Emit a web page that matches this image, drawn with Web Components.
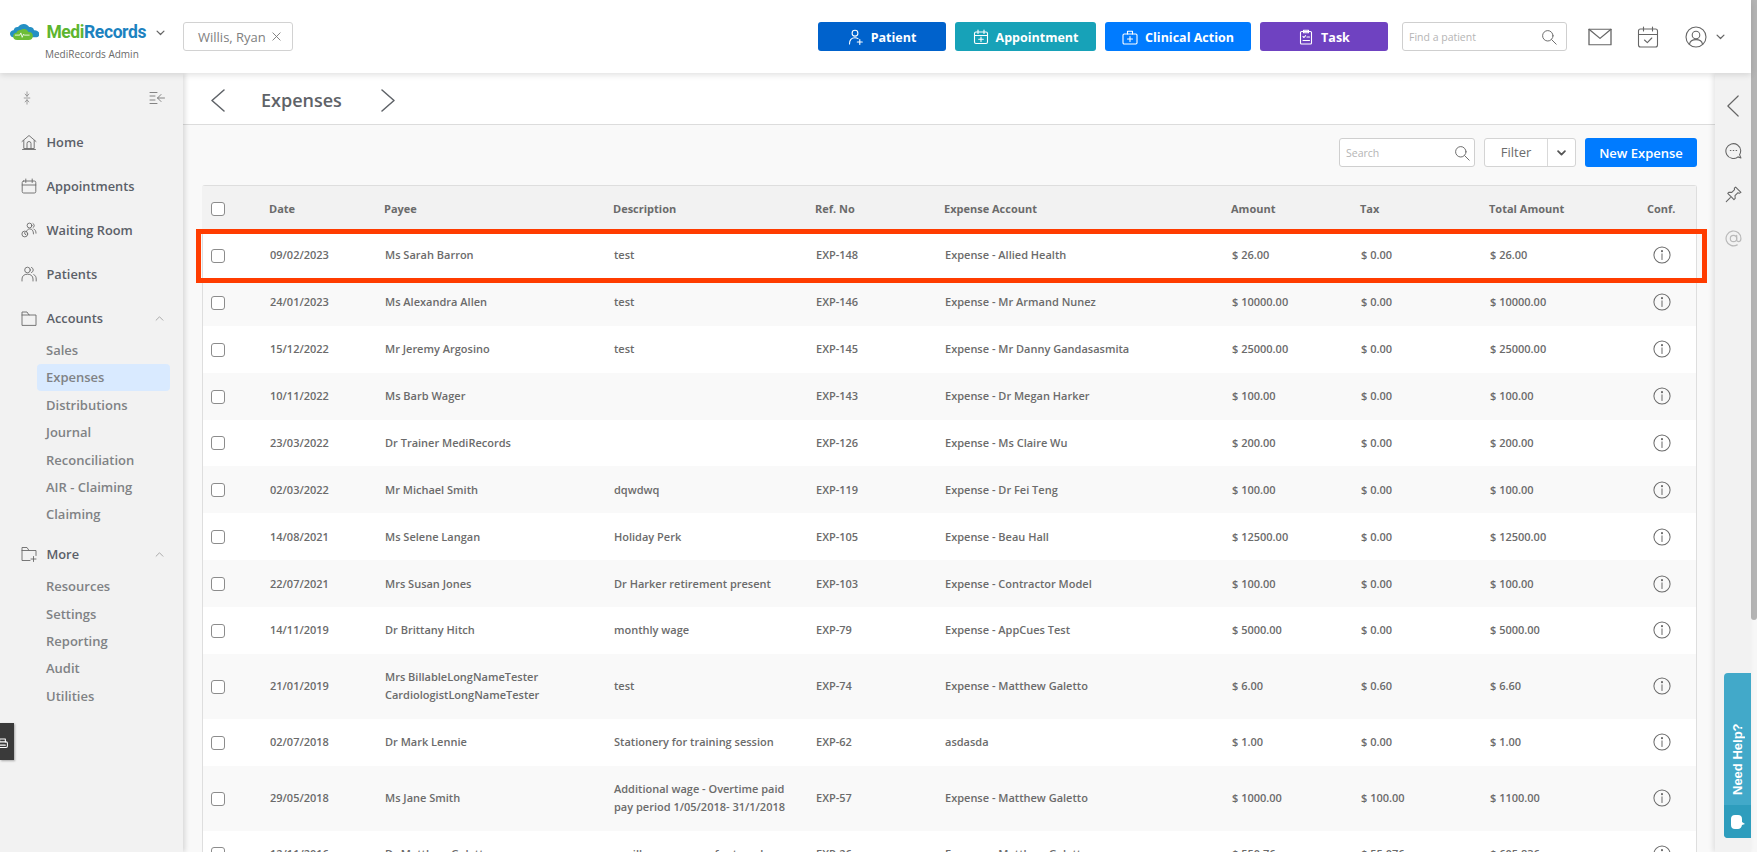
<!DOCTYPE html>
<html lang="en">
<head>
<meta charset="utf-8">
<title>Expenses</title>
<style>
    html, body { margin: 0; height: 100%; overflow: hidden; background: #f9f9f9; }
    body { font-family: "Open Sans", "Liberation Sans", sans-serif; }
</style>
</head>
<body>
<app-shell></app-shell>

<script>
const ICONS = {
    chevDown: '<path d="M3 6l5 5 5-5"/>',
    chevUp: '<path d="M3 10.5l5-5 5 5"/>',
    close: '<path d="M3.5 3.5l9 9M12.5 3.5l-9 9"/>',
    search: '<circle cx="6.8" cy="6.8" r="5.2"/><path d="M10.6 10.6l4.6 4.6"/>',
    patient: '<circle cx="7" cy="4.2" r="2.9"/><path d="M1.5 15c0-4 2-6.2 5.5-6.2 1.2 0 2.2.3 3 .8M11.8 10.5v5M9.3 13h5"/>',
    appointment: '<rect x="1.5" y="3" width="13" height="11.5" rx="1.5"/><path d="M1.5 6.5h13M5 1v3.4M11 1v3.4M8 8v4.6M5.7 10.3h4.6"/>',
    clinical: '<rect x="1" y="5" width="14" height="10" rx="1.2"/><path d="M5.5 5V2.2h5V5M8 7.5v5M5.5 10h5"/>',
    task: '<rect x="2.5" y="2.5" width="11" height="12.5" rx="1"/><path d="M5.5 1.2h5v2.6h-5zM5 7.5l1 1 1.6-1.8M9 8h2.5M5 11.5h6.5"/>',
    mail: '<rect x="1" y="2.5" width="22" height="17"/><path d="M1 2.5l11 10 11-10"/>',
    calCheck: '<rect x="1.5" y="3" width="19" height="18" rx="2"/><path d="M1.5 8.5h19M6.5 1v4M15.5 1v4M7.5 14l2.8 2.6 4.5-4.6"/>',
    user: '<circle cx="11" cy="11" r="10"/><circle cx="11" cy="9" r="3.8"/><path d="M4.5 18.2c.5-3 2.8-4.6 6.5-4.6s6 1.6 6.5 4.6"/>',
    pinch: '<path d="M8 1v5M5 3.500L8 6l3-2.500M8 15v-5M5 12.500L8 10l3 2.500M3.500 8h9"/>',
    collapse: '<path d="M1 2.5h7M1 6h5M1 10h5M1 13.5h7M15.5 8H8.5M12 4.5L8.5 8l3.5 3.5"/>',
    home: '<path d="M1 7.5L8 1.5l7 6M2.8 6.5V14.5h10.4V6.5M6 14.5V9.5a2 2 0 0 1 4 0v5M1.5 15.5h13"/>',
    calendar: '<rect x="1.2" y="3" width="13.6" height="12" rx="1.5"/><path d="M1.2 7h13.6M4.8 1v3.5M11.2 1v3.5"/>',
    waiting: '<circle cx="8.5" cy="3.5" r="2.4"/><path d="M12 1.5a2.4 2.4 0 0 1 0 4.2M5.5 9.5c.7-1.8 1.7-2.6 3.2-2.6 2.3 0 3.8 1.6 3.8 5M13 7.2c1.3.5 2 1.8 2 4"/><circle cx="3.8" cy="12" r="2.9"/><path d="M3.8 10.5V12l1 .7"/>',
    patients: '<circle cx="6.5" cy="4" r="2.8"/><path d="M1 15v-2c0-3 2.2-4.8 5.5-4.8S12 10 12 13v2M10.5 1.4a2.8 2.8 0 0 1 0 5.2M12.8 8.6c1.6.8 2.4 2.3 2.4 4.4v2"/>',
    folder: '<path d="M1 15V2h5l2 3h7v10zM1 5h7"/>',
    folderPlus: '<path d="M9 14.5H1V1.5h5l2 3h7v5M1 4.5h7M12.5 10.5v5M10 13h5"/>',
    info: '<circle cx="8" cy="8" r="7.2"/><path d="M8 7v5"/><circle cx="8" cy="4.6" r=".5"/>',
    chat: '<path d="M15 15l-2.800-1A7 7 0 1 1 14.800 8c0 1.500-.4 2.800-1.100 3.900z"/><path d="M5 8h.6M7.700 8h.6M10.400 8h.6"/>',
    pin: '<path d="M10 1l5 5-1.500.8-1.500-.4-2.600 2.600.2 2.600-1.200 1.200-2-2-3.400-3.400-.4-.4L3.800 5.800l2.600.2L9 3.400 8.800 2zM5 11l-3.800 3.800"/>',
    at: '<circle cx="8" cy="8" r="3"/><path d="M11 5v4.200c0 1.200.8 1.800 1.700 1.800 1.300 0 2.300-1.200 2.300-3A7 7 0 1 0 11.500 14"/>',
    back: '<path d="M13 1L1 12l12 11"/>',
    next: '<path d="M1 1l12 11L1 23"/>',
    printer: '<rect x="2" y="6" width="12" height="7" rx="1.500"/><path d="M4.500 6V2.500h7V6M4.500 10h7"/>'
};

class UiIcon extends HTMLElement {
    connectedCallback() {
        const name = this.getAttribute("name");
        const w = this.getAttribute("w") || 16;
        const h = this.getAttribute("h") || w;
        const vb = this.getAttribute("vb") || "0 0 16 16";
        const sw = this.getAttribute("sw") || 1;
        if (!this.shadowRoot) this.attachShadow({ mode: "open" });
        this.shadowRoot.innerHTML = `
        <style>
            :host { display: inline-flex; flex: none; color: inherit; }
            svg { display: block; fill: none; stroke: currentColor; stroke-linecap: round; stroke-linejoin: round; }
        </style>
        <svg width="${w}" height="${h}" viewBox="${vb}" stroke-width="${sw}" preserveAspectRatio="none">${ICONS[name]}</svg>`;
    }
}
customElements.define("ui-icon", UiIcon);

class ActionBtn extends HTMLElement {
    connectedCallback() {
        this.attachShadow({ mode: "open" });
        this.shadowRoot.innerHTML = `
        <style>
            :host {
                display: flex; align-items: center; justify-content: center; gap: 7px;
                box-sizing: border-box; height: 29px; padding-top: 1px; border-radius: 3px;
                background: var(--bg); color: #fff;
                width: var(--w);
                font-size: 12.5px; font-weight: 700;
            }
        </style>
        <ui-icon name="${this.getAttribute("icon")}" w="16" sw="1.1"></ui-icon>
        <slot></slot>`;
    }
}
customElements.define("action-btn", ActionBtn);

class SearchBox extends HTMLElement {
    connectedCallback() {
        this.attachShadow({ mode: "open" });
        this.shadowRoot.innerHTML = `
        <style>
            :host {
                display: flex; align-items: center; justify-content: space-between;
                box-sizing: border-box; height: 29px; width: var(--w);
                padding: 0 var(--pr, 9px) 0 6px;
                background: #fff; border: 1px solid #cfcfcf; border-radius: 3px;
                color: #b5b5b5; font-size: 10.5px; font-weight: 500;
            }
            ui-icon { color: #6f6f6f; }
        </style>
        <span>${this.getAttribute("placeholder")}</span>
        <ui-icon name="search" w="16"></ui-icon>`;
    }
}
customElements.define("search-box", SearchBox);

class AppHeader extends HTMLElement {
    connectedCallback() {
        this.attachShadow({ mode: "open" });
        this.shadowRoot.innerHTML = `
        <style>
            :host {
                display: flex; align-items: center; flex: none;
                box-sizing: border-box; height: 73px; padding: 0 25px 0 10px;
                background: #fff; position: relative; z-index: 3;
                box-shadow: 0 2px 6px rgba(0,0,0,.12);
            }
            .brand { width: 156px; flex: none; padding-top: 8px; }
            .logo { display: flex; align-items: center; height: 24px; }
            .word {
                margin-left: 7px; font: 700 17.5px "Roboto", "Liberation Sans", sans-serif;
                letter-spacing: -.4px; color: #1c82bf;
            }
            .word b { color: #5db52f; font-weight: 700; }
            .logo ui-icon { margin-left: 9px; color: #666; }
            .sub { margin: 3px 0 0 35px; font-size: 10px; font-weight: 500; color: #6a6a6a; white-space: nowrap; }
            .tag {
                display: flex; align-items: center; gap: 4px; box-sizing: border-box;
                width: 110px; height: 29px; margin-left: 17px; padding-left: 14px;
                border: 1px solid #d2d2d2; border-radius: 3px;
                font-size: 13px; color: #808080; white-space: nowrap;
            }
            .tag ui-icon { color: #777; }
            .actions { display: flex; gap: 9px; margin-left: auto; }
            search-box { margin-left: 14px; --w: 165px; }
            .mail { margin-left: 21px; color: #666; }
            .cal { margin-left: 25px; color: #666; }
            .user { margin-left: 26px; color: #666; }
            .caret { margin-left: 8px; color: #666; }
        </style>
        <div class="brand">
            <div class="logo">
                <svg width="33" height="18" viewBox="0 0 33 18">
                    <path d="M4 15C1 15 0 12.500 0 11c0-2.500 2-4 4-4 .5-2.500 3-4 5-3.500C10.500 1 13 0 15.500 0c3 0 5 1.500 6 3.500 2-.7 5 .5 5.500 3.500 3-.5 6 1.500 6 4.500 0 2.500-2 3.500-4 3.500z" fill="#2590c4"/>
                    <path d="M8 18c-3 0-4.500-2-4.500-4.300 0-2.200 1.700-3.700 3.700-3.900C8 7.500 10 6.500 12 6.800c1.500-1.300 4-1.500 6-.6 1.500.7 2.300 1.700 2.700 3 2.500-.4 5 1.200 5 4.200 0 2.600-1.700 4.600-4.700 4.600z" fill="#6cbd36"/>
                    <path d="M5.500 12.500h5.500l1.200-2.500 1.500 5 1.500-3.500.8 1h6" fill="none" stroke="#fff" stroke-width=".9"/>
                </svg>
                <span class="word"><b>Medi</b>Records</span>
                <ui-icon name="chevDown" w="11" sw="1.8"></ui-icon>
            </div>
            <div class="sub">MediRecords Admin</div>
        </div>
        <div class="tag">Willis, Ryan<ui-icon name="close" w="13" sw="1.1"></ui-icon></div>
        <div class="actions">
            <action-btn icon="patient" style="--bg:#0062cc;--w:128px">Patient</action-btn>
            <action-btn icon="appointment" style="--bg:#17a2b8;--w:141px">Appointment</action-btn>
            <action-btn icon="clinical" style="--bg:#007bff;--w:146px">Clinical Action</action-btn>
            <action-btn icon="task" style="--bg:#6f42c1;--w:128px">Task</action-btn>
        </div>
        <search-box placeholder="Find a patient"></search-box>
        <ui-icon class="mail" name="mail" w="24" h="20" vb="0 0 24 22" sw="1.3"></ui-icon>
        <ui-icon class="cal" name="calCheck" w="22" vb="0 0 22 22" sw="1.1"></ui-icon>
        <ui-icon class="user" name="user" w="22" vb="0 0 22 22" sw="1.1"></ui-icon>
        <ui-icon class="caret" name="chevDown" w="11" sw="1.8"></ui-icon>`;
    }
}
customElements.define("app-header", AppHeader);

class NavItem extends HTMLElement {
    connectedCallback() {
        const icon = this.getAttribute("icon");
        const open = this.hasAttribute("open");
        this.attachShadow({ mode: "open" });
        this.shadowRoot.innerHTML = `
        <style>
            :host {
                display: flex; align-items: center; box-sizing: border-box;
                height: 44px; padding-left: 21px;
                font-size: 12.8px; font-weight: 600; color: #5b6068;
            }
            ui-icon { color: #6a6a6a; margin-right: 9.5px; }
            .up { margin-left: auto; margin-right: 18px; color: #8a8a8a; }
        </style>
        <ui-icon name="${icon}" w="16" sw=".9"></ui-icon>
        <slot></slot>
        ${open ? '<ui-icon class="up" name="chevUp" w="11" sw="1"></ui-icon>' : ""}`;
    }
}
customElements.define("nav-item", NavItem);

class NavSub extends HTMLElement {
    connectedCallback() {
        this.attachShadow({ mode: "open" });
        this.shadowRoot.innerHTML = `
        <style>
            :host {
                display: flex; align-items: center; box-sizing: border-box;
                height: 27.4px; margin: 0 13px 0 37px; padding-left: 9px;
                border-radius: 4px;
                font-size: 13px; font-weight: 600; color: #808285;
            }
            :host([active]) { background: #d9eaff; }
        </style>
        <slot></slot>`;
    }
}
customElements.define("nav-sub", NavSub);

class NavGroup extends HTMLElement {
    connectedCallback() {
        this.attachShadow({ mode: "open" });
        this.shadowRoot.innerHTML = `
        <style>
            :host { display: block; margin-top: -3.6px; padding-bottom: 4px; }
        </style>
        <slot></slot>`;
    }
}
customElements.define("nav-group", NavGroup);

class AppSidebar extends HTMLElement {
    connectedCallback() {
        this.attachShadow({ mode: "open" });
        this.shadowRoot.innerHTML = `
        <style>
            :host {
                display: block; flex: none; width: 183px; box-sizing: border-box;
                padding-top: 4px; background: #f2f2f2;
                box-shadow: 2px 0 5px rgba(0,0,0,.14);
                position: relative; z-index: 2;
            }
            .top {
                display: flex; align-items: center; justify-content: space-between;
                height: 43px; padding: 0 18px 2px 22px; box-sizing: border-box; color: #777;
            }
            .tab {
                position: absolute; left: 0; top: 650px;
                width: 14px; height: 37px; overflow: hidden;
                background: #3a3a3a; color: #fff;
                display: flex; align-items: center; justify-content: flex-end;
                box-shadow: 1px 1px 2px rgba(0,0,0,.3);
            }
            .tab ui-icon { margin-right: 5px; margin-top: 3px; }
        </style>
        <div class="top">
            <ui-icon name="pinch" w="10" h="14" sw=".9"></ui-icon>
            <ui-icon name="collapse" w="16" sw=".9"></ui-icon>
        </div>
        <nav-item icon="home">Home</nav-item>
        <nav-item icon="calendar">Appointments</nav-item>
        <nav-item icon="waiting">Waiting Room</nav-item>
        <nav-item icon="patients">Patients</nav-item>
        <nav-item icon="folder" open>Accounts</nav-item>
        <nav-group>
            <nav-sub>Sales</nav-sub>
            <nav-sub active>Expenses</nav-sub>
            <nav-sub>Distributions</nav-sub>
            <nav-sub>Journal</nav-sub>
            <nav-sub>Reconciliation</nav-sub>
            <nav-sub>AIR - Claiming</nav-sub>
            <nav-sub>Claiming</nav-sub>
        </nav-group>
        <nav-item icon="folderPlus" open>More</nav-item>
        <nav-group>
            <nav-sub>Resources</nav-sub>
            <nav-sub>Settings</nav-sub>
            <nav-sub>Reporting</nav-sub>
            <nav-sub>Audit</nav-sub>
            <nav-sub>Utilities</nav-sub>
        </nav-group>
        <div class="tab"><ui-icon name="printer" w="13" sw="1.3"></ui-icon></div>`;
    }
}
customElements.define("app-sidebar", AppSidebar);

const GRID = "67px 115px 229px 202px 129px 287px 129px 129px 158px 1fr";

class ExpenseRow extends HTMLElement {
    connectedCallback() {
        const cells = JSON.parse(this.getAttribute("cells"));
        const head = this.hasAttribute("head");
        this.attachShadow({ mode: "open" });
        this.shadowRoot.innerHTML = `
        <style>
            :host {
                display: grid; grid-template-columns: ${GRID}; align-items: center;
                padding: 14.45px 0; background: #fff;
                font-size: 11px; line-height: 18px; font-weight: 550; color: #6b6b6b;
            }
            :host(:nth-child(even)) { background: #f9f9f9; }
            :host([head]) {
                padding: 13.5px 0 14.5px; background: #f2f2f2; font-weight: 700;
                margin-left: -1px;
            }
            .box {
                box-sizing: border-box; width: 14px; height: 14px; margin: 1px 0 0 8px;
                background: #fff; border: 1.3px solid #8c8c8c; border-radius: 3px;
            }
            :host([head]) .box { margin-left: 9px; }
            .desc { padding-right: 20px; }
            .payee { padding-right: 30px; }
            ui-icon { color: #6a6a6a; margin-left: 5px; }
        </style>
        <div class="box"></div>
        ${cells.map((c, i) => `<div class="${i === 1 ? "payee" : i === 2 ? "desc" : ""}">${c}</div>`).join("")}
        ${head ? "<div>Conf.</div>" : '<ui-icon name="info" w="18" sw=".9"></ui-icon>'}`;
    }
}
customElements.define("expense-row", ExpenseRow);

const ROWS = [
    ["09/02/2023", "Ms Sarah Barron", "test", "EXP-148", "Expense - Allied Health", "$ 26.00", "$ 0.00", "$ 26.00"],
    ["24/01/2023", "Ms Alexandra Allen", "test", "EXP-146", "Expense - Mr Armand Nunez", "$ 10000.00", "$ 0.00", "$ 10000.00"],
    ["15/12/2022", "Mr Jeremy Argosino", "test", "EXP-145", "Expense - Mr Danny Gandasasmita", "$ 25000.00", "$ 0.00", "$ 25000.00"],
    ["10/11/2022", "Ms Barb Wager", "", "EXP-143", "Expense - Dr Megan Harker", "$ 100.00", "$ 0.00", "$ 100.00"],
    ["23/03/2022", "Dr Trainer MediRecords", "", "EXP-126", "Expense - Ms Claire Wu", "$ 200.00", "$ 0.00", "$ 200.00"],
    ["02/03/2022", "Mr Michael Smith", "dqwdwq", "EXP-119", "Expense - Dr Fei Teng", "$ 100.00", "$ 0.00", "$ 100.00"],
    ["14/08/2021", "Ms Selene Langan", "Holiday Perk", "EXP-105", "Expense - Beau Hall", "$ 12500.00", "$ 0.00", "$ 12500.00"],
    ["22/07/2021", "Mrs Susan Jones", "Dr Harker retirement present", "EXP-103", "Expense - Contractor Model", "$ 100.00", "$ 0.00", "$ 100.00"],
    ["14/11/2019", "Dr Brittany Hitch", "monthly wage", "EXP-79", "Expense - AppCues Test", "$ 5000.00", "$ 0.00", "$ 5000.00"],
    ["21/01/2019", "Mrs BillableLongNameTester CardiologistLongNameTester", "test", "EXP-74", "Expense - Matthew Galetto", "$ 6.00", "$ 0.60", "$ 6.60"],
    ["02/07/2018", "Dr Mark Lennie", "Stationery for training session", "EXP-62", "asdasda", "$ 1.00", "$ 0.00", "$ 1.00"],
    ["29/05/2018", "Ms Jane Smith", "Additional wage - Overtime paid pay period 1/05/2018- 31/1/2018", "EXP-57", "Expense - Matthew Galetto", "$ 1000.00", "$ 100.00", "$ 1100.00"],
    ["12/11/2016", "Dr Matthew Galetto", "ancillary expenses for travel", "EXP-26", "Expense - Matthew Galetto", "$ 550.76", "$ 55.076", "$ 605.836"]
];

class ExpenseTable extends HTMLElement {
    connectedCallback() {
        this.attachShadow({ mode: "open" });
        const head = ["Date", "Payee", "Description", "Ref. No", "Expense Account", "Amount", "Tax", "Total Amount"];
        const attr = (cells) => JSON.stringify(cells).replace(/"/g, "&quot;");
        this.shadowRoot.innerHTML = `
        <style>
            :host {
                display: block; position: relative;
                border: 1px solid #dedede; border-bottom: 0; border-radius: 3px 3px 0 0;
                margin-bottom: -400px;
            }
            .mark {
                position: absolute; left: -7px; right: -11px; top: 43px; height: 54px;
                box-sizing: border-box; border: 5px solid #ff3c00; pointer-events: none;
            }
        </style>
        <expense-row head cells="${attr(head)}"></expense-row>
        <div>
            ${ROWS.map((r) => `<expense-row cells="${attr(r)}"></expense-row>`).join("")}
        </div>
        <div class="mark"></div>`;
    }
}
customElements.define("expense-table", ExpenseTable);

class ExpensesPage extends HTMLElement {
    connectedCallback() {
        this.attachShadow({ mode: "open" });
        this.shadowRoot.innerHTML = `
        <style>
            :host { display: flex; flex-direction: column; flex: 1; min-width: 0; overflow: hidden; background: #f9f9f9; }
            .title {
                display: flex; align-items: center; flex: none; box-sizing: border-box;
                height: 52px; padding-top: 3px; padding-left: 28px;
                background: #fff; border-bottom: 1px solid #dcdcdc;
                color: #5f6368;
            }
            h1 { margin: 0 0 0 36px; width: 120px; font-size: 18px; font-weight: 600; color: #5f6368; }
            .tools { display: flex; justify-content: flex-end; flex: none; gap: 9px; padding: 13px 18px 18px 19px; }
            search-box { --w: 136px; --pr: 4px; }
            .filter {
                display: flex; align-items: center; box-sizing: border-box;
                width: 92px; height: 29px;
                background: #fff; border: 1px solid #d4d4d4; border-radius: 3px;
                font-size: 13px; font-weight: 500; color: #6b6b6b;
            }
            .filter span { width: 63px; text-align: center; border-right: 1px solid #d9d9d9; line-height: 27px; height: 27px; box-sizing: border-box; }
            .filter ui-icon { margin-left: 8px; color: #555; }
            .new {
                display: flex; align-items: center; justify-content: center;
                width: 112px; height: 29px; border-radius: 3px;
                background: #007bff; color: #fff; font-size: 13px; font-weight: 600;
            }
            expense-table { margin-left: 19px; margin-right: 18px; }
        </style>
        <div class="title">
            <ui-icon name="back" w="14" h="23" vb="0 0 14 24" sw="1.500"></ui-icon>
            <h1>Expenses</h1>
            <ui-icon name="next" w="14" h="23" vb="0 0 14 24" sw="1.500"></ui-icon>
        </div>
        <div class="tools">
            <search-box placeholder="Search"></search-box>
            <div class="filter"><span>Filter</span><ui-icon name="chevDown" w="11" sw="2.600"></ui-icon></div>
            <div class="new">New Expense</div>
        </div>
        <expense-table></expense-table>`;
    }
}
customElements.define("expenses-page", ExpensesPage);

class RightRail extends HTMLElement {
    connectedCallback() {
        this.attachShadow({ mode: "open" });
        this.shadowRoot.innerHTML = `
        <style>
            :host {
                display: flex; flex-direction: column; align-items: center; flex: none;
                width: 36px; box-sizing: border-box; padding-top: 22px; gap: 27px;
                background: #f2f2f2; color: #666; position: relative; z-index: 1;
                box-shadow: -2px 0 5px rgba(0,0,0,.1);
            }
            .chat { margin-top: -2.5px; }
            .soft { color: #b9b9b9; }
            .help {
                position: absolute; right: 0; top: 600px; width: 27px; height: 165px;
                border-radius: 4px 0 0 4px; overflow: hidden;
                display: flex; flex-direction: column;
                background: #42a9c9; color: #fff;
            }
            .help span {
                flex: 1; display: flex; align-items: center; justify-content: flex-start;
                writing-mode: vertical-rl; transform: rotate(180deg);
                font: 700 13px "Liberation Sans", sans-serif; padding-inline-start: 10px;
            }
            .bubble { flex: none; height: 33px; background: #2e9dbd; display: flex; align-items: center; justify-content: center; }
        </style>
        <ui-icon name="back" w="12" h="22" vb="0 0 14 24" sw="1.400"></ui-icon>
        <ui-icon class="chat" name="chat" w="17" sw="1"></ui-icon>
        <ui-icon name="pin" w="17" sw="1"></ui-icon>
        <ui-icon class="soft" name="at" w="17" sw="1.1"></ui-icon>
        <div class="help">
            <span>Need Help?</span>
            <div class="bubble">
                <svg width="15" height="16" viewBox="0 0 15 16"><path d="M5 1h3a4 4 0 0 1 4 4v3l3 2-3 1c-.5 2.500-2 4-4 4H5a4 4 0 0 1-4-4V5a4 4 0 0 1 4-4z" fill="#fff"/></svg>
            </div>
        </div>`;
    }
}
customElements.define("right-rail", RightRail);

class AppShell extends HTMLElement {
    connectedCallback() {
        this.attachShadow({ mode: "open" });
        this.shadowRoot.innerHTML = `
        <style>
            :host { display: flex; width: 1757px; height: 852px; overflow: hidden; }
            .app { display: flex; flex-direction: column; flex: 1; min-width: 0; }
            .body { display: flex; flex: 1; min-height: 0; }
            .track { flex: none; width: 6px; background: #f7f7f7; }
            .thumb { height: 620px; background: #b4b4b4; border-radius: 0 0 3px 3px; }
        </style>
        <div class="app">
            <app-header></app-header>
            <div class="body">
                <app-sidebar></app-sidebar>
                <expenses-page></expenses-page>
                <right-rail></right-rail>
            </div>
        </div>
        <div class="track"><div class="thumb"></div></div>`;
    }
}
customElements.define("app-shell", AppShell);
</script>
</body>
</html>
